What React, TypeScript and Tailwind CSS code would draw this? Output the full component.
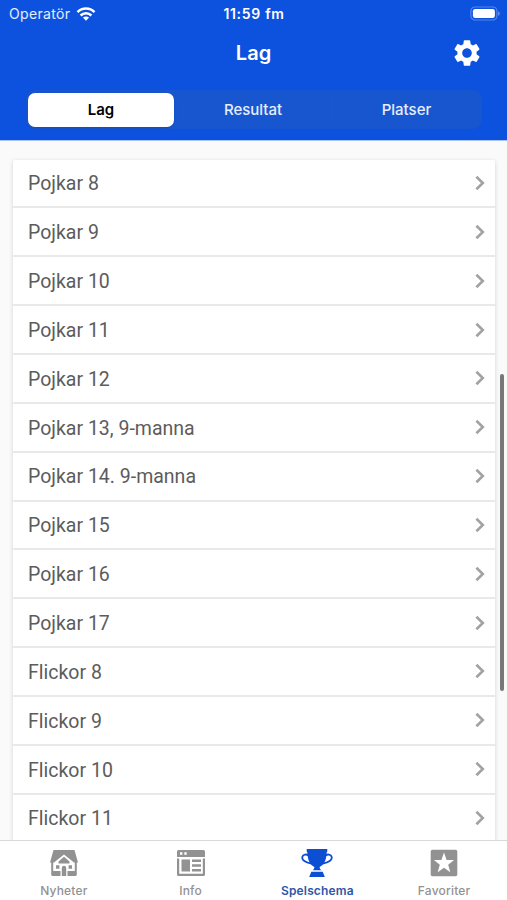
import React from "react"
import { MdSettings } from "react-icons/md"

const teams = [
  "Pojkar 8",
  "Pojkar 9",
  "Pojkar 10",
  "Pojkar 11",
  "Pojkar 12",
  "Pojkar 13, 9-manna",
  "Pojkar 14. 9-manna",
  "Pojkar 15",
  "Pojkar 16",
  "Pojkar 17",
  "Flickor 8",
  "Flickor 9",
  "Flickor 10",
  "Flickor 11",
]

function WifiIcon() {
  return (
    <svg width="20" height="14" viewBox="0 0 20 14" fill="none" stroke="white" strokeWidth="2.5">
      <path d="M1.5 5.2C6.2 .3 13.8 .3 18.5 5.2" />
      <path d="M4.6 8.5C7.6 5.5 12.4 5.5 15.4 8.5" />
      <path d="M10 13.8 6.9 10.6C8.7 9 11.3 9 13.1 10.6Z" fill="white" stroke="none" />
    </svg>
  )
}

function BatteryIcon() {
  return (
    <svg width="31" height="15" viewBox="0 0 31 15">
      <rect x="0.9" y="1" width="26" height="13" rx="4" fill="none" stroke="white" strokeOpacity="0.3" strokeWidth="1.2" />
      <rect x="2.9" y="3" width="22" height="9" rx="2.2" fill="white" />
      <path d="M28.2 5.2C30.2 6 30.2 9 28.2 9.8Z" fill="white" fillOpacity="0.4" />
    </svg>
  )
}

function HouseIcon() {
  return (
    <svg width="30" height="28" viewBox="0 0 30 28" fill="currentColor">
      <path d="M4.5 1H25.5L29 13.5H25L15 5.5 5 13.5H1Z" />
      {/* Walls and base */}
      <path d="M2.2 13H4.2V22H11.5V27H3.7Q2.2 27 2.2 25.5ZM27.8 13H25.8V22H18.5V27H26.3Q27.8 27 27.8 25.5Z" />
      {/* Gable */}
      <path d="M15 7.8 20.5 12.4V14.6H9.5V12.4Z" />
      <path d="M7 16.3H10.4V19.7H7ZM19.6 16.3H23V19.7H19.6Z" />
      <path d="M12.8 27V19A2.2 2.2 0 0 1 17.2 19V27Z" />
    </svg>
  )
}

function InfoIcon() {
  return (
    <svg width="30" height="28" viewBox="0 0 30 28" fill="currentColor">
      <path
        fillRule="evenodd"
        d="M2.5 1H27.5Q29 1 29 2.5V8H1V2.5Q1 1 2.5 1ZM4 3.3V5.7H6.4V3.3ZM8.3 3.3V5.7H10.7V3.3Z"
      />
      <path fillRule="evenodd" d="M1 9.5H29V25.5Q29 27 27.5 27H2.5Q1 27 1 25.5ZM3.2 9.5V24.8H26.8V9.5Z" />
      <path d="M5.5 10.5H14V22.5H5.5ZM16 10.5H25V13H16ZM16 15.2H25V17.7H16ZM16 20H25V22.5H16Z" />
    </svg>
  )
}

function TrophyIcon() {
  return (
    <svg width="32" height="30" viewBox="0 0 32 30" fill="currentColor">
      <path d="M5.7 1H26.3V3.2C25.7 4 25.5 5.5 25.3 8C24.7 14 21.8 17.5 18.6 18.9C18.7 20.5 19.4 21.5 20.5 22.2H11.5C12.6 21.5 13.3 20.5 13.4 18.9C10.2 17.5 7.3 14 6.7 8C6.5 5.5 6.3 4 5.7 3.2Z" />
      <path d="M10.3 23.7H21.7L23.8 29H8.2Z" />
      <path d="M7.3 7.5C5.7 6 2 6 1.3 9C.7 12 5.2 14.5 10.4 15.6M24.7 7.5C26.3 6 30 6 30.7 9C31.3 12 26.8 14.5 21.6 15.6" fill="none" stroke="currentColor" strokeWidth="1.8" />
    </svg>
  )
}

function StarIcon() {
  return (
    <svg width="28" height="28" viewBox="0 0 28 28" fill="currentColor">
      <path
        fillRule="evenodd"
        d="M2.5 .7H25.5Q27.3 .7 27.3 2.5V25.5Q27.3 27.3 25.5 27.3H2.5Q.7 27.3 .7 25.5V2.5Q.7 .7 2.5 .7ZM14 3.6 11.4 11.1H3.9L9.8 15.7 7.7 23.2 14 18.8 20.3 23.2 18.2 15.7 24.1 11.1H16.6Z"
      />
    </svg>
  )
}

const navItems = [
  { label: "Nyheter", icon: <HouseIcon /> },
  { label: "Info", icon: <InfoIcon /> },
  { label: "Spelschema", icon: <TrophyIcon />, active: true },
  { label: "Favoriter", icon: <StarIcon /> },
]

export default function App() {
  return (
    <div className="flex h-[900px] w-[507px] flex-col overflow-hidden bg-[#fafafa] font-['Inter',sans-serif]">
      <header className="h-[141px] shrink-0 border-b border-[#a9c3f8] bg-[#0d52de] text-white">
        {/* Status bar */}
        <div className="grid h-[27px] grid-cols-3 items-center pr-[6px] pl-[9px]">
          <div className="flex items-center gap-[6px]">
            <span className="text-[14px] tracking-[0.35px] text-white/90">Operatör</span>
            <WifiIcon />
          </div>
          <span className="pr-[2px] text-center text-[14px] font-semibold tracking-[0.7px]">11:59 fm</span>
          <div className="flex justify-end">
            <BatteryIcon />
          </div>
        </div>

        {/* Title */}
        <div className="grid h-[51px] grid-cols-3 items-center pr-[24px] pl-[24px]">
          <h1 className="col-start-2 text-center text-[20px] leading-6 font-semibold">Lag</h1>
          <MdSettings className="justify-self-end" size={32} />
        </div>

        {/* Tabs */}
        <div className="mt-[12px] mr-[25px] ml-[26px] flex h-[39px] items-center rounded-[9px] bg-[#1856d0] p-[2px] text-[15px] font-medium">
          <button className="h-[34px] w-[146px] rounded-[7px] bg-white pt-[2px] font-semibold text-black shadow-sm">Lag</button>
          <button className="h-[34px] w-[158px] pt-[2px] text-white/90">Resultat</button>
          <span className="h-5 w-px bg-[#1d59ce]"></span>
          <button className="h-[34px] flex-1 pt-[2px] text-white/90">Platser</button>
        </div>
      </header>

      <main className="relative min-h-0 flex-1 overflow-hidden pt-[18.6px] pr-3 pl-[13px]">
        <ul className="rounded-t-[2px] bg-white font-['Roboto',sans-serif] shadow-[0_1px_4px_rgba(0,0,0,0.16)]">
          {teams.map((team) => (
            <li
              key={team}
              className="flex h-[48.85px] items-center justify-between border-b-2 border-[#e9e9e9] pt-[2px] pr-[10px] pl-[15px] text-[19.5px] text-[#5c5c5c]"
            >
              <span>{team}</span>
              <svg className="mb-[2px]" width="10" height="16" viewBox="0 0 10 16" fill="none" stroke="#a2a2a2" strokeWidth="2.6">
                <path d="M1.4 1.8 7.8 8 1.4 14.2" />
              </svg>
            </li>
          ))}
        </ul>
        {/* Scroll indicator */}
        <div className="absolute top-[233px] right-[3px] h-[317px] w-[4px] rounded-full bg-[#777]"></div>
      </main>

      <nav className="z-10 grid h-[60px] shrink-0 grid-cols-4 border-t border-[#d9d9d9] bg-white">
        {navItems.map((item) => (
          <div
            key={item.label}
            className={`flex flex-col items-center ${item.active ? "text-[#0d4fd2]" : "text-[#929292]"}`}
          >
            <div className="flex h-[42px] items-center pt-px pl-px">{item.icon}</div>
            <span
              className={`pl-px text-[12px] leading-4 ${item.active ? "font-semibold tracking-[0.15px] text-[#2d57a8]" : "font-medium tracking-[0.2px]"}`}
            >
              {item.label}
            </span>
          </div>
        ))}
      </nav>
    </div>
  )
}
